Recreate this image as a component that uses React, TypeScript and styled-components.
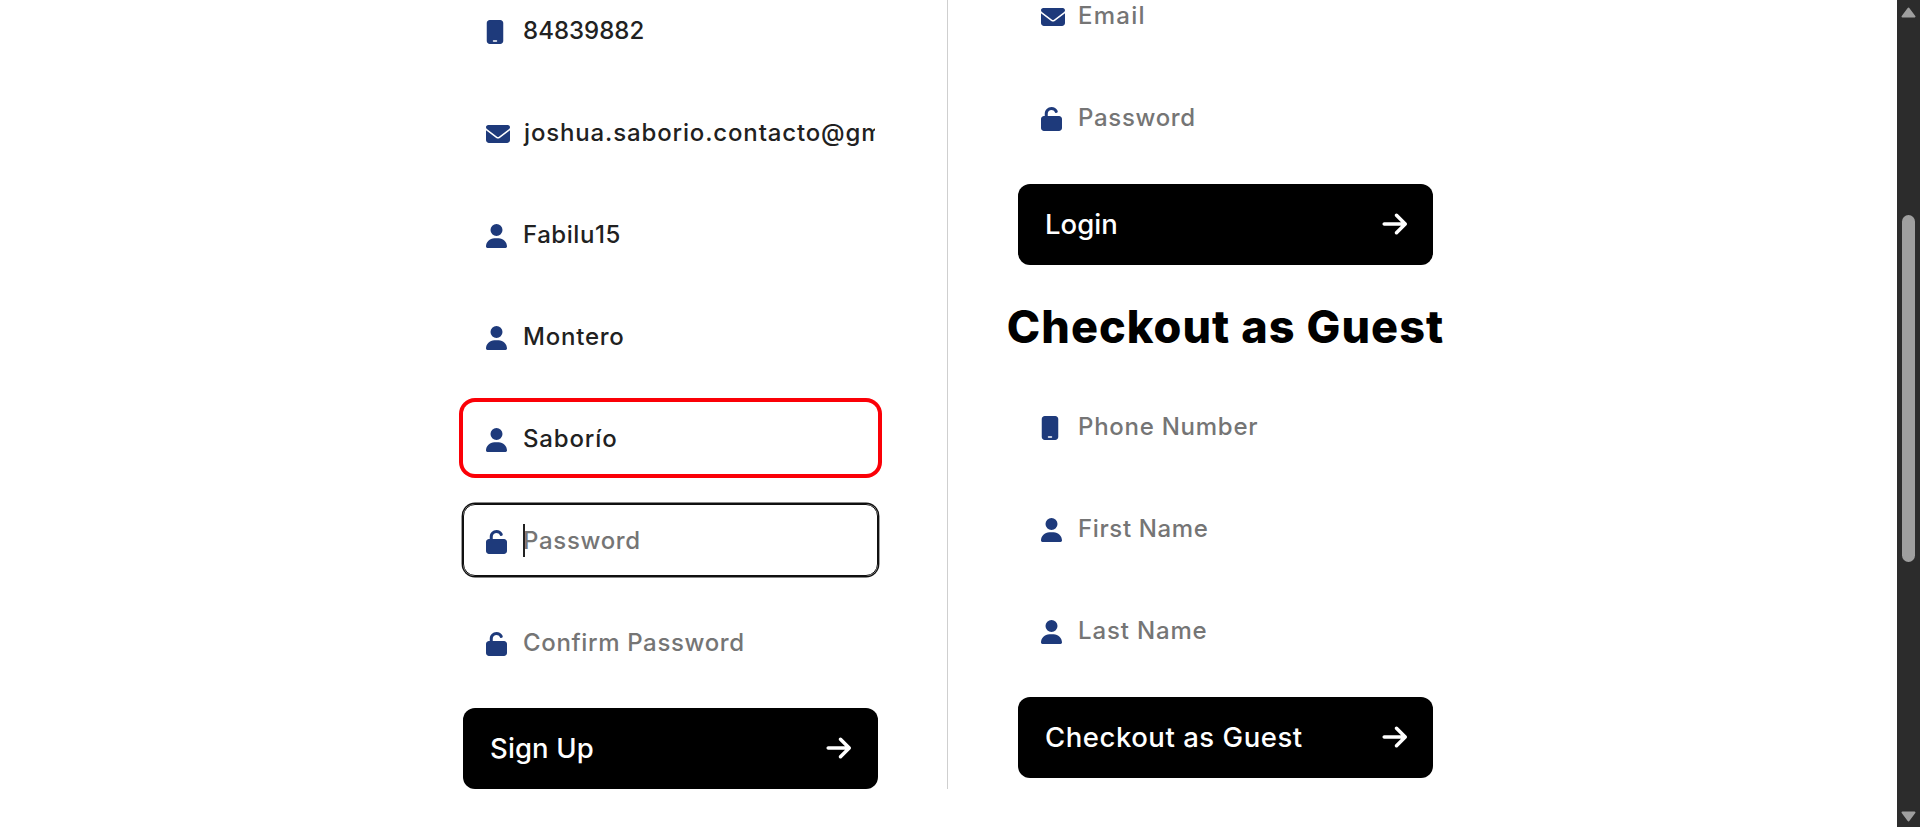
import React from "react";
import styled, { createGlobalStyle, css } from "styled-components";
import { FaMobile, FaEnvelope, FaUser, FaUnlock, FaArrowRight } from "react-icons/fa6";
import type { IconType } from "react-icons";

const GlobalStyle = createGlobalStyle`
  *, *::before, *::after { box-sizing: border-box; }
  body {
    margin: 0;
    background: #fff;
    color: #212121;
    font-family: Inter, "Open Sans", sans-serif;
    overflow: hidden;
  }
`;

const Page = styled.div`
  display: flex;
  height: 827px;
  overflow: hidden;
`;

const Content = styled.main`
  flex: 1;
  display: flex;
  align-items: flex-start;
  padding-left: 463px;
`;

const SignUpColumn = styled.section`
  width: 485px;
  height: 789px;
  padding-right: 69px;
  border-right: 1px solid #cfcfcf;
`;

const AccountColumn = styled.section`
  width: 415px;
  margin-left: 70px;
`;

const Form = styled.form<{ $shift?: number }>`
  display: flex;
  flex-direction: column;
  gap: 30px;
  margin-top: ${(p) => p.$shift ?? 0}px;
`;

type FieldState = "idle" | "invalid" | "focused";

const FieldBox = styled.label<{ $state: FieldState }>`
  display: flex;
  align-items: center;
  height: 72px;
  padding: 0 3px 0 23px;
  border-radius: 12px;
  ${(p) => p.$state === "invalid" && css`box-shadow: 0 0 0 4px #fb0007;`}
  ${(p) =>
    p.$state === "focused" &&
    css`
      border: 1px solid #101010;
      box-shadow: 0 0 0 1.4px #101010;
      padding: 0 2px 0 22px;
    `}
`;

const IconSlot = styled.span`
  flex: none;
  display: flex;
  width: 37px;
  margin-top: 2px;
  color: #1e3a7b;

  ${SignUpColumn} & {
    margin-top: 4px;
  }

  svg {
    width: 24px;
    height: 24px;
  }
`;

const FieldText = styled.span<{ $placeholder: boolean; $tracking: number; $indent: number }>`
  position: relative;
  flex: 1;
  overflow: hidden;
  padding-left: ${(p) => p.$indent}px;
  font-size: 24px;
  font-weight: 450;
  line-height: 36px;
  letter-spacing: ${(p) => p.$tracking}px;
  white-space: nowrap;
  color: ${(p) => (p.$placeholder ? "#757575" : "#212121")};

  ${SignUpColumn} & {
    margin-top: 2px;
  }
`;

const Caret = styled.i`
  position: absolute;
  left: 0;
  top: 1px;
  width: 2px;
  height: 33px;
  background: #212121;
`;

const SubmitButton = styled.button<{ $tracking: number }>`
  display: flex;
  align-items: center;
  justify-content: space-between;
  height: 81px;
  padding: 0 27px 2px 27px;
  border: 0;
  border-radius: 12px;
  background: #000;
  color: #fff;
  font: 500 27.5px/40px Inter, "Open Sans", sans-serif;
  letter-spacing: ${(p) => p.$tracking}px;

  ${AccountColumn} & {
    padding-right: 26px;
  }

  svg {
    width: 28px;
    height: 28px;
  }
`;

const Heading = styled.h2`
  display: flex;
  justify-content: center;
  margin: 0;
  height: 126px;
  padding-top: 34px;
  font-size: 45px;
  line-height: 56px;
  font-weight: 780;
  letter-spacing: 1.05px;
  white-space: nowrap;
  color: #000;
`;

interface FieldProps {
  icon: IconType;
  text: string;
  tracking: number;
  filled?: boolean;
  state?: FieldState;
  indent?: number;
}

function Field({ icon: Icon, text, tracking, filled = false, state = "idle", indent = 0 }: FieldProps) {
  return (
    <FieldBox $state={state}>
      <IconSlot><Icon preserveAspectRatio="xMinYMid meet" /></IconSlot>
      <FieldText $placeholder={!filled} $tracking={tracking} $indent={indent}>
        {state === "focused" && <Caret />}
        {text}
      </FieldText>
    </FieldBox>
  );
}

function Submit({ label, tracking }: { label: string; tracking: number }) {
  return (
    <SubmitButton type="button" $tracking={tracking}>
      {label}
      <FaArrowRight preserveAspectRatio="xMaxYMid meet" />
    </SubmitButton>
  );
}

const ScrollTrack = styled.aside`
  flex: none;
  display: flex;
  flex-direction: column;
  align-items: center;
  width: 23px;
  height: 827px;
  padding: 7px 0 5px;
  background: #2c2c2c;

  svg {
    display: block;
    fill: #9f9f9f;
    stroke: #9f9f9f;
    stroke-width: 2;
    stroke-linejoin: round;
  }
`;

const ScrollThumb = styled.div`
  width: 13px;
  height: 347px;
  margin: 197px 0 249px;
  border-radius: 7px;
  background: #9f9f9f;
`;

export default function App() {
  return (
    <>
      <GlobalStyle />
      <Page>
        <Content>
          <SignUpColumn>
            <Form $shift={-6}>
              <Field icon={FaMobile} text="84839882" tracking={0.02} filled />
              <Field icon={FaEnvelope} text="joshua.saborio.contacto@gmail.com" tracking={0.85} indent={1} filled />
              <Field icon={FaUser} text="Fabilu15" tracking={0.55} filled />
              <Field icon={FaUser} text="Montero" tracking={0.78} filled />
              <Field icon={FaUser} text="Saborío" tracking={0.85} state="invalid" filled />
              <Field icon={FaUnlock} text="Password" tracking={0.68} state="focused" />
              <Field icon={FaUnlock} text="Confirm Password" tracking={0.64} />
              <Submit label="Sign Up" tracking={0.13} />
            </Form>
          </SignUpColumn>
          <AccountColumn>
            <Form $shift={-20}>
              <Field icon={FaEnvelope} text="Email" tracking={1.25} />
              <Field icon={FaUnlock} text="Password" tracking={0.68} />
              <Submit label="Login" tracking={0.05} />
            </Form>
            <Heading>Checkout as Guest</Heading>
            <Form>
              <Field icon={FaMobile} text="Phone Number" tracking={0.74} />
              <Field icon={FaUser} text="First Name" tracking={0.62} />
              <Field icon={FaUser} text="Last Name" tracking={0.85} />
              <Submit label="Checkout as Guest" tracking={0.54} />
            </Form>
          </AccountColumn>
        </Content>
        <ScrollTrack>
          <svg width="15" height="11" viewBox="0 0 15 11"><path d="M7.5 1.5 13.5 9.5h-12Z" /></svg>
          <ScrollThumb />
          <svg width="15" height="11" viewBox="0 0 15 11"><path d="M7.5 9.5 13.5 1.5h-12Z" /></svg>
        </ScrollTrack>
      </Page>
    </>
  );
}
